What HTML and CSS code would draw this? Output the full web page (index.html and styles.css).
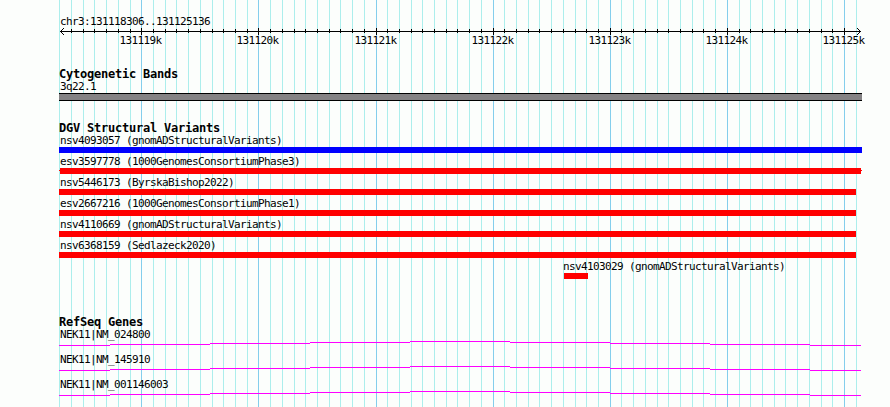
FILE: index.html
```html
<!DOCTYPE html>
<html lang="en">
<head>
    <meta charset="UTF-8">
    <meta name="viewport" content="width=device-width, initial-scale=1.0">
    <title>chr3:131118306..131125136</title>
    <link rel="stylesheet" href="styles.css">
</head>
<body>
    <svg class="grid" width="890" height="407">
        <path class="grid-minor" id="gridMinor"/>
        <path class="grid-major" id="gridMajor"/>
    </svg>

    <div class="panel">
        <div class="ruler">
            <div class="label">chr3:131118306..131125136</div>
            <svg class="axis" width="831" height="17">
                <path d="M1 3.5H802M1.5 3.5L5 0M1.5 3.5L5 7M801.5 3.5L798 0M801.5 3.5L798 7"/>
                <path id="ticks"/>
                <g id="tickLabels"></g>
            </svg>
        </div>

        <div class="track cytobands">
            <h2>Cytogenetic Bands</h2>
            <div class="label">3q22.1</div>
            <div class="band"></div>
        </div>

        <div class="track variants">
            <h2>DGV Structural Variants</h2>
            <div class="variant gain">
                <div class="label">nsv4093057 (gnomADStructuralVariants)</div>
                <div class="bar"></div>
            </div>
            <div class="variant clipped">
                <div class="label">esv3597778 (1000GenomesConsortiumPhase3)</div>
                <div class="bar"></div>
            </div>
            <div class="variant">
                <div class="label">nsv5446173 (ByrskaBishop2022)</div>
                <div class="bar"></div>
            </div>
            <div class="variant">
                <div class="label">esv2667216 (1000GenomesConsortiumPhase1)</div>
                <div class="bar"></div>
            </div>
            <div class="variant">
                <div class="label">nsv4110669 (gnomADStructuralVariants)</div>
                <div class="bar"></div>
            </div>
            <div class="variant">
                <div class="label">nsv6368159 (Sedlazeck2020)</div>
                <div class="bar"></div>
            </div>
            <div class="variant short">
                <div class="label">nsv4103029 (gnomADStructuralVariants)</div>
                <div class="bar"></div>
            </div>
        </div>

        <div class="track genes">
            <h2>RefSeq Genes</h2>
            <div class="gene">
                <div class="label">NEK11|NM_024800</div>
                <svg class="intron" width="803" height="5">
                    <path d="M0 4.5H51M51 3.5H151M151 2.5H251M251 1.5H351M351 .5H451M451 1.5H551M551 2.5H651M651 3.5H751M751 4.5H802"/>
                </svg>
            </div>
            <div class="gene">
                <div class="label">NEK11|NM_145910</div>
                <svg class="intron" width="803" height="5">
                    <path d="M0 4.5H51M51 3.5H151M151 2.5H251M251 1.5H351M351 .5H451M451 1.5H551M551 2.5H651M651 3.5H751M751 4.5H802"/>
                </svg>
            </div>
            <div class="gene">
                <div class="label">NEK11|NM_001146003</div>
                <svg class="intron" width="803" height="5">
                    <path d="M0 4.5H51M51 3.5H151M151 2.5H251M251 1.5H351M351 .5H451M451 1.5H551M551 2.5H651M651 3.5H751M751 4.5H802"/>
                </svg>
            </div>
        </div>
    </div>

    <script src="grid.js"></script>
</body>
</html>
```

FILE: styles.css
```css
body {
    margin: 0;
    height: 407px;
    overflow: hidden;
    position: relative;
    background-color: #fcfefc;
    color: #000;
    font-family: "DejaVu Sans Mono", monospace;
}
.grid {
    position: absolute;
    top: 0;
    left: 0;
}
.grid path, .axis path, .intron path {
    fill: none;
    stroke-width: 1;
    shape-rendering: crispEdges;
}
.grid .grid-minor {
    stroke: #aceeec;
}
.grid .grid-major {
    stroke: #84ceec;
}
.panel {
    position: relative;
    width: 803px;
    padding: 15px 0 0 59px;
}
.label, .axis text {
    font-size: 11px;
    letter-spacing: -0.622px;
}
.label {
    height: 13px;
    line-height: 13px;
    padding-left: 1px;
    white-space: nowrap;
}
h2 {
    margin: 0;
    height: 13px;
    font-size: 12px;
    line-height: 14px;
    font-weight: bold;
    letter-spacing: -0.225px;
    white-space: nowrap;
}
svg {
    display: block;
}
.axis {
    overflow: visible;
}
.axis path {
    stroke: #000;
}
.cytobands {
    margin-top: 22px;
}
.band {
    height: 6px;
    background-color: #848284;
    border-top: 1px solid #000;
    border-bottom: 1px solid #000;
}
.variants {
    margin-top: 20px;
}
.variant {
    margin-bottom: 2px;
}
.bar {
    width: 797px;
    height: 6px;
    background-color: #f00;
}
.gain .bar {
    width: 803px;
    background-color: #00f;
}
/* feature runs past both edges of the region */
.clipped .bar {
    width: 803px;
    background: linear-gradient(#f00, #f00) 1px 0 / 801px 6px no-repeat,
                linear-gradient(#f00, #f00) 0 2px / 803px 1px no-repeat;
}
.short {
    margin-left: 504px;
}
.short .label {
    padding-left: 0;
}
.short .bar {
    width: 24px;
    margin-left: 1px;
}
.genes {
    margin-top: 36px;
}
.gene {
    margin-bottom: 7px;
}
.intron path {
    stroke: #f0f;
}
```

FILE: grid.js
```js
// one line per 100 bp, a major one per 1000 bp
const left = 59;
const firstLine = 59.82;
const step = 11.711;
let minor = "", major = "", ticks = "", labels = "";

for (let i = 0; i <= 68; i++) {
    const x = Math.floor(firstLine + i * step);
    const mid = x + 0.5;
    if (i % 10 === 7) {
        major += `M${mid} 0V407`;
        ticks += `M${mid - left} 0V7`;
        labels += `<text x="${x - left - 21.6}" y="16">${131119 + (i - 7) / 10}k</text>`;
    } else {
        minor += `M${mid} 0V407`;
        if (i > 0 && i < 68) {
            ticks += `M${mid - left} 1V5`;
        }
    }
}

document.getElementById("gridMinor").setAttribute("d", minor);
document.getElementById("gridMajor").setAttribute("d", major);
document.getElementById("ticks").setAttribute("d", ticks);
document.getElementById("tickLabels").innerHTML = labels;
```
